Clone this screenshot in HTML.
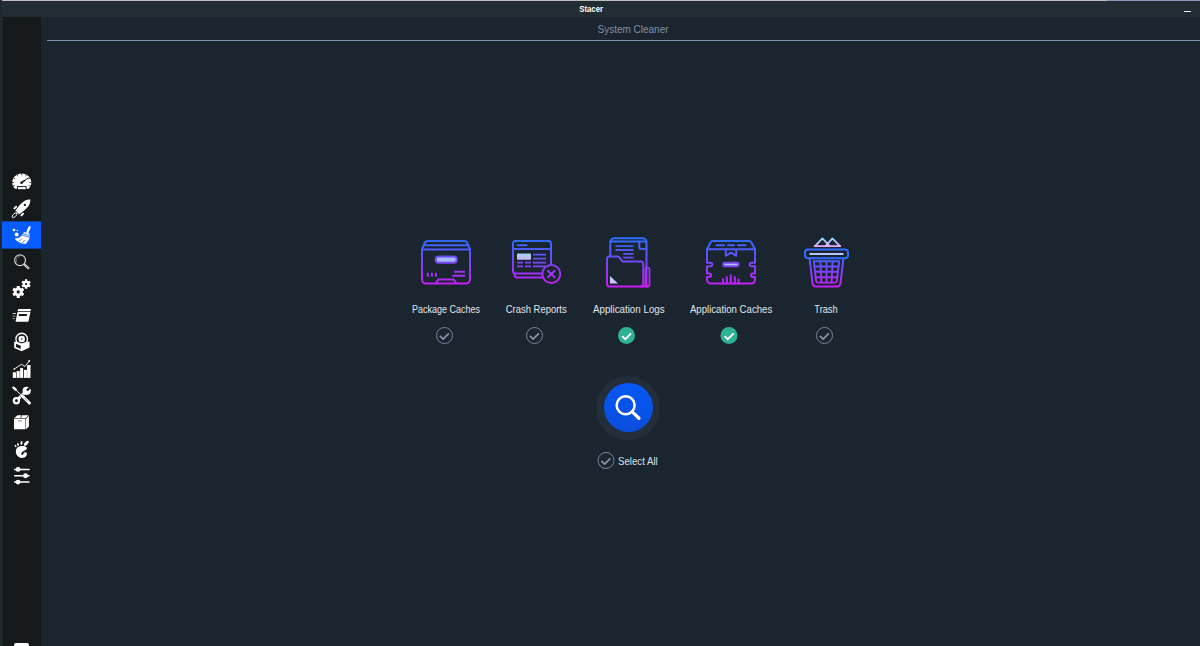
<!DOCTYPE html>
<html lang="en">
<head>
<meta charset="utf-8">
<title>Stacer</title>
<style>
*{box-sizing:border-box;margin:0;padding:0}
html,body{width:1200px;height:646px;overflow:hidden;background:#212d33}
body{position:relative;font-family:"Liberation Sans","DejaVu Sans",sans-serif;color:#d5dae2}
.abs{position:absolute}
#topline{left:2px;top:0;width:1105px;height:1px;background:#bdbdbd}
#topline2{left:1107px;top:0;width:93px;height:1px;background:#8797bb}
#titlebar{left:0;top:1px;width:1200px;height:16px;background:#212d33}
#title{left:0;top:1.200px;width:1183px;height:16px;line-height:16px;text-align:center;font-size:8.600px;font-weight:bold;color:#fff}
#minbtn{left:1184px;top:11px;width:7px;height:1px;background:#f4f4f4}
#sidebar{left:3px;top:17px;width:38px;height:629px;background:#15191c}
#main{left:41px;top:17px;width:1159px;height:629px;background:#1a252f}
#pagetitle{left:56.5px;top:19px;width:1153px;height:20px;line-height:20px;text-align:center;font-size:10.700px;color:#8390a6}
#hr{left:47px;top:40px;width:1153px;height:1px;background:#7f91b2}
#col0{left:0;top:1px;width:1px;height:645px;background:#1f282e}
#sbedge{left:2px;top:17px;width:1px;height:629px;background:#1c2327}
.lbl span,#selall span,#pagetitle span,#title span{display:inline-block;transform-origin:50% 50%}
.lbl{top:303px;height:13px;line-height:13px;font-size:10.300px;color:#e2e5ea;white-space:nowrap;text-align:center;width:120px}
#scan{left:596px;top:376px;width:64px;height:64px;border-radius:50%;background:#232e3a}
#scanin{left:8px;top:7px;width:49px;height:49px;border-radius:50%;background:linear-gradient(#0658f6,#0a4dda)}
#selall{left:618px;top:455.200px;height:13px;line-height:13px;font-size:10.300px;color:#dde1e8;white-space:nowrap}
#botico{left:14px;top:643px;width:15px;height:6px;background:#fff;border-radius:2px 2px 0 0}
</style>
</head>
<body>
<div class="abs" id="topline"></div>
<div class="abs" id="topline2"></div>
<div class="abs" id="titlebar"></div>
<div class="abs" id="title"><span style="transform:scaleX(.900)">Stacer</span></div>
<div class="abs" id="minbtn"></div>
<div class="abs" id="sidebar"></div>
<div class="abs" id="sbedge"></div>
<div class="abs" id="col0"></div>
<div class="abs" id="main"></div>
<div class="abs" id="pagetitle"><span style="transform:scaleX(.935)">System Cleaner</span></div>
<div class="abs" id="hr"></div>

<!--SB-START-->
<svg class="abs" style="left:0;top:0" width="50" height="646" viewBox="0 0 50 646" fill="none">
<rect x="2" y="221.400" width="39" height="27.200" fill="#085cff"/>
<g><path d="M14.8 188.7C13.2 187.2 12.2 185 12.2 182.6C12.2 177.4 16.4 173.4 21.75 173.4C27.1 173.4 31.3 177.4 31.3 182.6C31.3 185 30.3 187.2 28.700 188.700Z" fill="#fff"/>
<path d="M28.64 185.39L30.81 186.33M29.35 182.40L31.75 182.40M28.33 178.87L30.41 177.75M25.55 176.28L26.75 174.35M21.75 175.33L21.75 173.10M17.95 176.28L16.75 174.35M15.17 178.87L13.09 177.75M14.15 182.40L11.75 182.40M14.86 185.39L12.69 186.33" stroke="#15191c" stroke-width=".8"/>
<path d="M21.5 182.700L28.300 177.900" stroke="#15191c" stroke-width="1" stroke-linecap="round"/><path d="M21.500 182.700L24.500 180.600" stroke="#15191c" stroke-width="1.600" stroke-linecap="round"/><circle cx="21.500" cy="182.700" r="1.250" fill="#15191c"/>
<rect x="17" y="186.100" width="9.600" height="3.500" fill="#15191c"/><rect x="17.900" y="187.100" width="7.800" height="2.100" fill="#fff"/></g>
<g transform="translate(23.800 206) rotate(45)"><path d="M0 -9.300C2.600 -7 3.700 -3.500 3.600 0C3.500 3.500 3.200 6.500 2.700 9.100L-2.700 9.100C-3.200 6.500 -3.500 3.500 -3.600 0C-3.700 -3.500 -2.600 -7 0 -9.300Z" fill="#fff"/><circle cx="0" cy="-1.550" r="1.150" fill="#15191c"/><rect x="-5.900" y="5" width="2" height="4.300" rx="1" fill="#fff"/><rect x="3.900" y="5" width="2" height="4.300" rx="1" fill="#fff"/><ellipse cx="0" cy="13.200" rx="1.500" ry="2.900" stroke="#fff" stroke-width=".9"/><path d="M-1.800 9.900H1.800" stroke="#fff" stroke-width=".7"/></g>
<g><path d="M29.600 227.300L27.500 232.200" stroke="#fff" stroke-width="2.300" stroke-linecap="round"/><path d="M24 231.900L29.600 233.800L29.600 237.800C29.200 239.600 27.800 241.600 25.800 243.900C21 244 17 241.800 14.700 238.600C17.500 238.600 20.500 237.500 22.300 234.800Z" fill="#fff"/><path d="M23 233.700L29.600 235.500M22.300 235.100L29.600 237.300" stroke="#085cff" stroke-width=".75"/><path d="M21.400 239.300L19.700 240.600M24.500 240.300L22.600 242.500" stroke="#085cff" stroke-width=".8" stroke-linecap="round"/><circle cx="14" cy="230" r="1.350" fill="#fff"/><circle cx="17.400" cy="230.500" r=".750" fill="#fff"/><circle cx="16.600" cy="234.500" r="2" fill="#fff"/></g>
<g><circle cx="20.050" cy="260.250" r="5.400" stroke="#cfcfcf" stroke-width="1.200"/><path d="M17.100 262.600A3.800 3.800 0 0 1 19.800 256.500" stroke="#8a8a8a" stroke-width=".7"/><path d="M24.500 264.600L28.300 268.100" stroke="#cfcfcf" stroke-width="2.400" stroke-linecap="round"/><path d="M25.800 265.800L27.800 267.600" stroke="#777" stroke-width=".7" stroke-linecap="round"/></g>
<g><circle cx="18.25" cy="291.9" r="4.5" fill="#fff"/><rect x="16.70" y="285.90" width="3.1" height="2.70" rx=".3" fill="#fff" transform="rotate(0 18.25 291.9)"/><rect x="16.70" y="285.90" width="3.1" height="2.70" rx=".3" fill="#fff" transform="rotate(60 18.25 291.9)"/><rect x="16.70" y="285.90" width="3.1" height="2.70" rx=".3" fill="#fff" transform="rotate(120 18.25 291.9)"/><rect x="16.70" y="285.90" width="3.1" height="2.70" rx=".3" fill="#fff" transform="rotate(180 18.25 291.9)"/><rect x="16.70" y="285.90" width="3.1" height="2.70" rx=".3" fill="#fff" transform="rotate(240 18.25 291.9)"/><rect x="16.70" y="285.90" width="3.1" height="2.70" rx=".3" fill="#fff" transform="rotate(300 18.25 291.9)"/><circle cx="18.25" cy="291.9" r="1.6" fill="#15191c"/><circle cx="26.1" cy="284.05" r="3.4" fill="#fff"/><rect x="24.90" y="279.35" width="2.4" height="2.50" rx=".3" fill="#fff" transform="rotate(0 26.1 284.05)"/><rect x="24.90" y="279.35" width="2.4" height="2.50" rx=".3" fill="#fff" transform="rotate(60 26.1 284.05)"/><rect x="24.90" y="279.35" width="2.4" height="2.50" rx=".3" fill="#fff" transform="rotate(120 26.1 284.05)"/><rect x="24.90" y="279.35" width="2.4" height="2.50" rx=".3" fill="#fff" transform="rotate(180 26.1 284.05)"/><rect x="24.90" y="279.35" width="2.4" height="2.50" rx=".3" fill="#fff" transform="rotate(240 26.1 284.05)"/><rect x="24.90" y="279.35" width="2.4" height="2.50" rx=".3" fill="#fff" transform="rotate(300 26.1 284.05)"/><circle cx="26.1" cy="284.05" r="1.15" fill="#15191c"/></g>
<g><path d="M18.400 309H30.400Q31 309 30.900 309.600L30.600 311H17.700L18 309.500Q18.100 309 18.400 309Z" fill="#fff"/><path d="M17.600 311.700H30.500L28.500 321.200Q28.400 321.700 27.900 321.700H16.100Q15.500 321.700 15.600 321.100Z" fill="#fff"/><path d="M19 314H27.100L26.700 315.900H18.600Z" fill="#15191c"/><path d="M12.600 313.500H16" stroke="#d8d8d8" stroke-width=".9"/><path d="M12.700 316.100H15.300" stroke="#aaa" stroke-width=".9"/><path d="M12.700 318.600H14.800" stroke="#c4c4c4" stroke-width=".9"/></g>
<g><circle cx="21.700" cy="339.050" r="5.800" stroke="#fff" stroke-width="1.300"/><circle cx="21.700" cy="339.050" r="3.200" fill="#fff"/><circle cx="21.700" cy="339.050" r=".800" fill="#15191c"/><path d="M14.200 341.400L18.500 342.300L21.700 343.400L25 342.300L29.500 341.400V347.600L21.700 351.200L14.200 348Z" fill="#fff"/><path d="M16 343.700L20.700 345.700V349.100L16 347.100Z" fill="#15191c"/></g>
<g fill="#fff"><rect x="12.800" y="372.300" width="3.200" height="5.600"/><rect x="16.600" y="371.100" width="3.100" height="6.800"/><rect x="20.100" y="368.100" width="3" height="9.800"/><rect x="23.900" y="369.900" width="3" height="8"/><rect x="27.100" y="365" width="3.400" height="12.900"/><path d="M14.200 369L21.500 364.300L25 366.500L29.300 360.900" stroke="#fff" stroke-width=".9" fill="none" stroke-linejoin="round" stroke-linecap="round"/><circle cx="14.200" cy="369" r=".800"/><circle cx="29.200" cy="361" r=".900"/></g>
<g><path d="M16.400 400.700L26.900 390.600" stroke="#fff" stroke-width="3"/><circle cx="16.400" cy="400.700" r="3.700" fill="#fff"/><circle cx="16.400" cy="400.700" r="1.450" fill="#15191c"/><circle cx="26.700" cy="390.800" r="4.100" fill="#fff"/><path d="M27 390.500L31.500 386" stroke="#15191c" stroke-width="2.300"/><path d="M16 390L21 394.800" stroke="#15191c" stroke-width="1.800"/><path d="M13.400 387.600L15.700 389.700" stroke="#fff" stroke-width="2.300" stroke-linecap="round"/><path d="M15 389L22 395.800" stroke="#fff" stroke-width="1"/><path d="M22.600 396.300L29.600 403.200" stroke="#15191c" stroke-width="3.900" stroke-linecap="round"/><path d="M22.300 396L29.400 403" stroke="#fff" stroke-width="3.100" stroke-linecap="round"/><path d="M24 397.700L28 401.600" stroke="#15191c" stroke-width=".7" stroke-dasharray="1 .6"/></g>
<g><rect x="14" y="418.700" width="11.500" height="10.600" rx=".4" fill="#fff"/><path d="M14.200 418.200L17.500 415.200H28.700L25.500 418.200Z" fill="#fff"/><path d="M26 418.700L28.900 415.700V426.400L26 429.200Z" fill="#fff"/><path d="M21.700 415.200L20.600 418.300" stroke="#15191c" stroke-width=".8"/><rect x="18" y="420" width="4" height="1.700" rx=".5" fill="#bdbdbd"/></g>
<g fill="#fff"><path d="M26.800 447.800C26 445.700 19.700 445.200 17.200 447.800C14.900 450.300 15.600 455 18.800 457C22.300 459.100 27.200 457.600 26.900 453.600C26.800 452 24.300 452 23.600 453.200C23.100 454.100 23.200 454.900 22.200 454.900C21.200 454.900 21 453.500 21.900 452.400C23.200 450.800 27.600 450 26.800 447.800Z"/><ellipse cx="26.300" cy="443.300" rx="1.500" ry="3.100" transform="rotate(42 26.300 443.300)"/><ellipse cx="21.500" cy="443" rx="1" ry="1.900" transform="rotate(5 21.500 443)"/><ellipse cx="18.050" cy="444.400" rx=".850" ry="1.500" transform="rotate(-18 18.050 444.400)"/><ellipse cx="15.600" cy="446" rx=".750" ry="1.250" transform="rotate(-35 15.600 446)"/></g>
<g fill="#fff" stroke="#fff" stroke-width="1.500" stroke-linecap="round"><path d="M14.700 469.400H29M14.700 475.700H29M14.700 482.100H29"/><circle cx="18.050" cy="469.400" r="1.700"/><circle cx="25.500" cy="475.700" r="1.700"/><circle cx="18.050" cy="482.100" r="1.700"/></g>
</svg>
<!--SB-END-->

<!--CATEGORY-ICONS-START-->
<svg class="abs" style="left:0;top:0" width="1200" height="646" viewBox="0 0 1200 646" fill="none" stroke-linecap="round" stroke-linejoin="round">
<defs>
<linearGradient id="g" gradientUnits="userSpaceOnUse" x1="0" y1="239" x2="0" y2="286"><stop offset="0" stop-color="#2a6eff"/><stop offset="1" stop-color="#c81cf2"/></linearGradient>
<linearGradient id="gl" gradientUnits="userSpaceOnUse" x1="0" y1="238" x2="0" y2="286"><stop offset="0" stop-color="#8fd8ff"/><stop offset="0.25" stop-color="#d8a8ff"/><stop offset="0.45" stop-color="#a9bcff"/><stop offset="1" stop-color="#e8b0ff"/></linearGradient>
<linearGradient id="gl2" gradientUnits="userSpaceOnUse" x1="0" y1="253.500" x2="0" y2="260"><stop offset="0" stop-color="#9fd8f6"/><stop offset="1" stop-color="#ceb0f8"/></linearGradient>
<linearGradient id="gl3" gradientUnits="userSpaceOnUse" x1="0" y1="276" x2="0" y2="284"><stop offset="0" stop-color="#9fdcf8"/><stop offset="1" stop-color="#e6b0ff"/></linearGradient>
<linearGradient id="gl5" gradientUnits="userSpaceOnUse" x1="0" y1="238" x2="0" y2="246.500"><stop offset="0" stop-color="#86d9ff"/><stop offset="1" stop-color="#eba6ff"/></linearGradient>
<linearGradient id="g5" gradientUnits="userSpaceOnUse" x1="0" y1="257" x2="0" y2="287"><stop offset="0" stop-color="#3f66ff"/><stop offset="1" stop-color="#c81cf2"/></linearGradient>
</defs>
<!-- Package Caches -->
<g stroke="url(#g)" stroke-width="2">
<path d="M422 249.5L424.6 243.2Q425.5 241 428 241H464Q466.500 241 467.400 243.200L470 249.500"/>
<path d="M424.300 245.300H467.700"/>
<path d="M422 249.500H470V279.600A4 4 0 0 1 466 283.600H426A4 4 0 0 1 422 279.600Z"/>
<rect x="435.600" y="256.600" width="21.200" height="6.100" rx="3.050" fill="#a3bbff"/>
<path d="M435.700 283.300L438.200 279.600H453.800L456.300 283.300"/>
<path d="M427.900 272.800V276.800M431.900 272.800V276.800M436 272.800V276.800M454.200 271.800H465M452.200 275.800H465" stroke-width="2" stroke-linecap="butt"/>
</g>
<!-- Crash Reports -->
<g stroke="url(#g)" stroke-width="2">
<rect x="513" y="241" width="38" height="32.500" rx="2.500"/>
<path d="M513 249H551M517.500 245.300H526.500"/>
<path d="M514.600 274V275A2.500 2.500 0 0 0 517.100 277.500H543"/>
<rect x="517" y="253.600" width="14" height="6.200" rx="1" fill="url(#gl2)" stroke="none"/>
<path d="M533 254.600H546M533 258.700H546M533 262.600H546M533 266.300H546M517 262.600H523M525 262.600H531M517 266.300H523M525 266.300H531" stroke-width="1.800" stroke-linecap="butt"/>
<circle cx="551.300" cy="274" r="9" fill="#1a252f"/>
<path d="M548 270.700L554.600 277.300M554.600 270.700L548 277.300"/>
</g>
<!-- Application Logs -->
<g stroke="url(#g)" stroke-width="2">
<path d="M610.300 256V241.500L611.500 239.500Q612.300 238.200 614 238.200H643Q644.700 238.200 645.500 239.500L646.500 241.500V285"/>
<path d="M610.300 241.500H646.500M639.300 241.500V247A2 2 0 0 0 641.300 249H646.500"/>
<path d="M615.500 246.100H633.500M615.500 250H633.500M623.200 253.900H633.500M623.200 257.700H633.500" stroke-width="1.800" stroke-linecap="butt"/>
<path d="M607 259A2.500 2.500 0 0 1 609.500 256.500H617.500Q618.800 256.500 619.600 257.500L621.600 260.300Q622.400 261.400 623.700 261.400H640.800A2.500 2.500 0 0 1 643.300 263.900V284A2.500 2.500 0 0 1 640.800 286.500H609.500A2.500 2.500 0 0 1 607 284Z" fill="#1a252f"/>
<rect x="645.400" y="267.600" width="4.100" height="18.900" rx="2.050" stroke-width="1.800"/><path d="M640.800 286.500H647.400"/>
<path d="M610 276V283.600H618Z" fill="url(#gl3)" stroke="none"/>
</g>
<!-- Application Caches -->
<g stroke="url(#g)" stroke-width="2">
<path d="M707 249.500L710.400 242.800Q711.300 241 713.500 241H748.500Q750.700 241 751.600 242.800L755 249.500"/>
<path d="M707 249.300H755"/>
<path d="M716.500 245.300H724M728 245.300H734M738 245.300H745.500"/>
<path d="M725.800 249.500V255.800L731 252.600L736.200 255.800V249.500"/>
<path d="M707 249.500V262.800H710.600A1.750 1.750 0 0 1 710.600 266.300H707V273.500H709.300A1.750 1.750 0 0 1 709.300 277H707V279.600A4 4 0 0 0 711 283.600H751A4 4 0 0 0 755 279.600V277H752.700A1.750 1.750 0 0 1 752.700 273.500H755V266.300H751.400A1.750 1.750 0 0 1 751.400 262.800H755V249.500"/>
<rect x="723.200" y="262.700" width="15.400" height="3.600" rx="1.800" fill="#b4c4ff"/>
<path d="M723 279.200V283.600M726.800 277V283.600M730.800 275.200V283.600M734.800 277V283.600M738.600 279.200V283.600" stroke-width="2"/>
</g>
<!-- Trash -->
<g stroke="url(#g5)" stroke-width="2">
<path d="M815 246.100L822.400 238.400L829.800 246.100M825.500 246.100L832.400 238.400L840 246.100M814.600 246.100H840.400" stroke="url(#gl5)" stroke-width="1.800"/>
<rect x="805" y="249.600" width="43" height="8.600" rx="3" stroke="#2f6bff"/>
<path d="M809.500 254H843.500" stroke="#b7c5ff" stroke-width="1.800" stroke-linecap="butt"/>
<path d="M809.600 258.500L812.500 283.300Q812.900 286.500 816 286.500H837Q840.100 286.500 840.500 283.300L843.400 258.500"/>
<g stroke-width="1.900">
<path d="M813.800 261.200H839.200L836.900 281Q836.700 282.600 835 282.600H818Q816.300 282.600 816.100 281Z"/>
<path d="M820.400 261.200L821.400 282.600M826.500 261.200V282.600M832.600 261.200L831.600 282.600M814.400 266.500H838.600M815 271.800H838M815.600 277.300H837.400"/>
</g>
</g>
</svg>
<!--CATEGORY-ICONS-END-->

<div class="abs lbl" style="left:386px"><span style="transform:scaleX(.873)">Package Caches</span></div>
<div class="abs lbl" style="left:476.5px"><span style="transform:scaleX(.918)">Crash Reports</span></div>
<div class="abs lbl" style="left:568.6px"><span style="transform:scaleX(.949)">Application Logs</span></div>
<div class="abs lbl" style="left:671.1px"><span style="transform:scaleX(.933)">Application Caches</span></div>
<div class="abs lbl" style="left:766.1px"><span style="transform:scaleX(.898)">Trash</span></div>

<!--CHECKS-START-->
<svg class="abs" style="left:0;top:0" width="1200" height="646" viewBox="0 0 1200 646" fill="none" stroke-linecap="butt" stroke-linejoin="miter">
<circle cx="444.5" cy="335.5" r="8" stroke="#77859b" stroke-width="1"/><path d="M439.9 335.9L443.1 339.1L448.9 333.3" stroke="#8595ab" stroke-width="1.8"/>
<circle cx="534.5" cy="335.5" r="8" stroke="#77859b" stroke-width="1"/><path d="M529.9 335.9L533.1 339.1L538.9 333.3" stroke="#8595ab" stroke-width="1.8"/>
<circle cx="626.5" cy="335.5" r="8.5" fill="#2fb294"/><path d="M622.1 336.1L625.3 339.2L631.1 333.4" stroke="#fff" stroke-width="1.8"/>
<circle cx="729" cy="335.5" r="8.5" fill="#2fb294"/><path d="M724.6 336.1L727.8 339.2L733.6 333.4" stroke="#fff" stroke-width="1.8"/>
<circle cx="824.5" cy="335.5" r="8" stroke="#77859b" stroke-width="1"/><path d="M819.9 335.9L823.1 339.1L828.9 333.3" stroke="#8595ab" stroke-width="1.8"/>
<circle cx="606" cy="460.5" r="8" stroke="#77859b" stroke-width="1"/><path d="M601.4 460.9L604.6 464.1L610.4 458.3" stroke="#8595ab" stroke-width="1.8"/>
</svg>
<!--CHECKS-END-->

<div class="abs" id="scan"><div class="abs" id="scanin"></div>
<svg class="abs" style="left:0;top:0" width="64" height="64" viewBox="0 0 64 64"><circle cx="29.650" cy="29.250" r="9" fill="none" stroke="#fff" stroke-width="2.500"/><path d="M36.300 35.900L42.900 42.300" stroke="#fff" stroke-width="3.300" stroke-linecap="round"/></svg>
</div>
<div class="abs" id="selall"><span style="transform:scaleX(.937);transform-origin:0 50%">Select All</span></div>
<div class="abs" id="botico"></div>
</body>
</html>
